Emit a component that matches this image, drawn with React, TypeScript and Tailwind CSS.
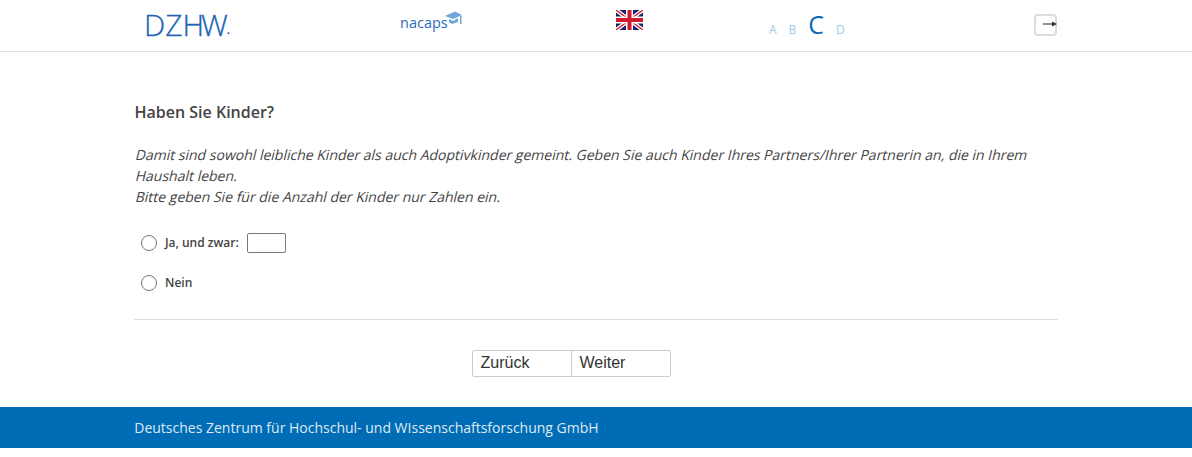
export default function App() {
  return (
    <div className="min-h-[457px] bg-white text-[#444] font-['Open_Sans',sans-serif]">
      <header className="h-[52px] border-b border-[#e0e0e0]">
        <div className="relative mx-auto flex h-[51px] w-[924px]">
          <div className="absolute left-[10px] top-[4px] flex text-[30px] font-light leading-[41px] text-[#2264b4] [-webkit-text-stroke:0.3px_#2264b4]">
            <span className="tracking-[0px]">DZH</span>
            <span className="-ml-[3px] tracking-[-1.5px]">W</span>
            <span className="text-[18px] leading-[47px]">.</span>
          </div>
          <div className="absolute left-[266px] top-[8px] flex items-start">
            <span className="text-[14.5px] leading-[30px] text-[#2a6db5]">nacaps</span>
            <svg width="17" height="15" viewBox="0 0 17 15" className="-ml-[3px] mt-[3px]">
              <path d="M0 5 L10 0.5 L17 4 L8 8 Z" fill="#6fa8d8" />
              <path d="M4 8 L8 10 L13 7 L13 11 L7 13 L4 11 Z" fill="#6fa8d8" />
              <rect x="15" y="5" width="1.5" height="8" fill="#6fa8d8" />
            </svg>
          </div>
          <svg width="27" height="20" viewBox="0 0 27 20" className="absolute left-[482px] top-[10px]">
            <rect width="27" height="20" fill="#14216b" />
            <path d="M0 0 L27 20 M27 0 L0 20" stroke="#fff" strokeWidth="4" />
            <path d="M0 0 L27 20 M27 0 L0 20" stroke="#cf1b2b" strokeWidth="1.4" />
            <path d="M13.5 0 V20 M0 10 H27" stroke="#fff" strokeWidth="7" />
            <path d="M13.5 0 V20 M0 10 H27" stroke="#cf1b2b" strokeWidth="4" />
          </svg>
          <div className="absolute left-[635px] top-[9px] flex h-[30px] items-end gap-[12px] text-[12px] leading-[18px] text-[#a3cbe9]">
            <span>A</span>
            <span>B</span>
            <span className="text-[25px] leading-[30px] text-[#0a69b4]">C</span>
            <span>D</span>
          </div>
          <div className="absolute left-[900px] top-[14px] h-[22px] w-[23px] rounded-[4px] border-2 border-[#dcdcdc]">
            <svg width="16" height="8" viewBox="0 0 16 8" className="absolute left-[7px] top-[4px] overflow-visible">
              <path d="M0 4 H10" stroke="#444" strokeWidth="1.2" />
              <path d="M9 1.5 L14 4 L9 6.5 Z" fill="#333" />
            </svg>
          </div>
        </div>
      </header>

      <main className="mx-auto w-[924px] pt-[48px]">
        <h2 className="pl-[0.5px] text-[16px] font-semibold leading-[24px] text-[#444]">Haben Sie Kinder?</h2>
        <div className="mt-[20px] pl-[0.5px] text-[14px] leading-[21px] text-[#444]">
          <p className="origin-[0_15px] -skew-x-[14deg]">Damit sind sowohl leibliche Kinder als auch Adoptivkinder gemeint. Geben Sie auch Kinder Ihres Partners/Ihrer Partnerin an, die in Ihrem</p>
          <p className="origin-[0_15px] -skew-x-[14deg]">Haushalt leben.</p>
          <p className="origin-[0_15px] -skew-x-[14deg]">Bitte geben Sie für die Anzahl der Kinder nur Zahlen ein.</p>
        </div>
        <div className="mt-[26px] flex h-[20px] items-center pl-[7px]">
          <span className="h-[16px] w-[16px] rounded-full border border-[#767676] bg-white" />
          <span className="ml-[8px] text-[12px] font-semibold text-[#444]">Ja, und zwar:</span>
          <span className="ml-[8px] h-[20px] w-[39px] rounded-[2px] border border-[#767676]" />
        </div>
        <div className="mt-[20px] flex h-[20px] items-center pl-[7px]">
          <span className="h-[16px] w-[16px] rounded-full border border-[#767676] bg-white" />
          <span className="ml-[8px] text-[12px] font-semibold text-[#444]">Nein</span>
        </div>
        <div className="mt-[26px] border-t border-[#dedede]" />
        <div className="mt-[30px] flex">
          <div className="ml-[338px] flex h-[27px] w-[199px] rounded-[2px] border border-[#ccc] font-['Liberation_Sans',sans-serif] text-[16px] leading-[24px] text-[#333]">
            <span className="w-[99px] border-r border-[#ccc] pl-[7.5px]">Zurück</span>
            <span className="pl-[7.5px]">Weiter</span>
          </div>
        </div>
      </main>

      <footer className="mt-[30px] h-[41px] bg-[#006cb5]">
        <div className="mx-auto w-[924px] pl-[0.25px] text-[14px] leading-[41px] text-[#dfeaf4]">
          Deutsches Zentrum für Hochschul- und WIssenschaftsforschung GmbH
        </div>
      </footer>
    </div>
  );
}
